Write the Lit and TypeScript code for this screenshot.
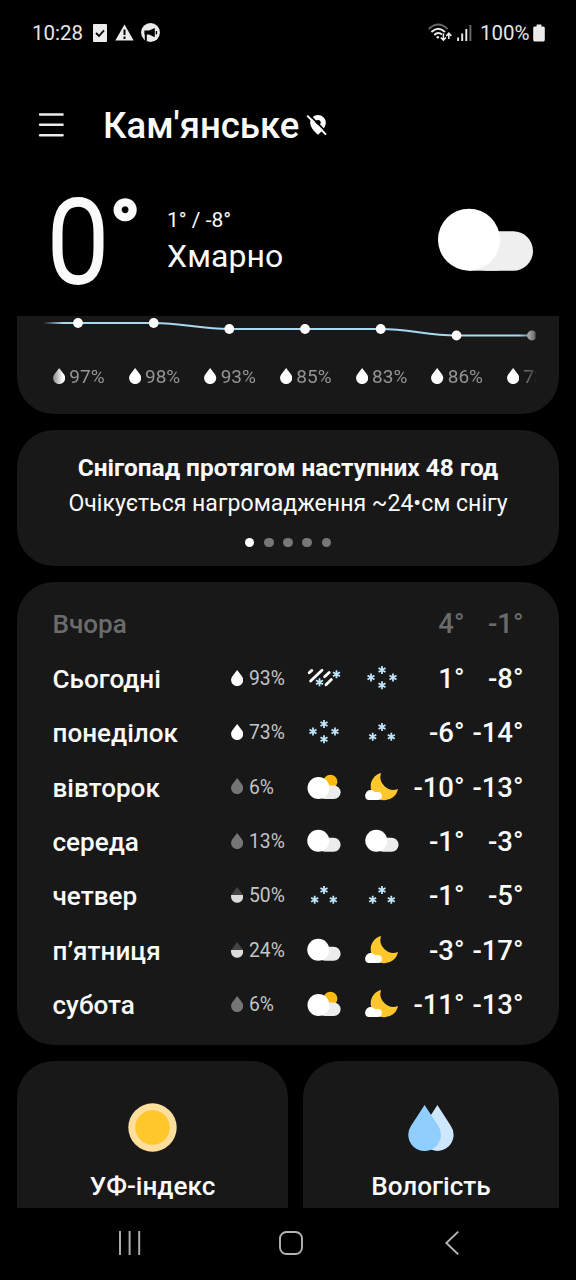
import { LitElement, html, svg, css } from "lit";
import { customElement } from "lit/decorators.js";

type Level = "full" | "half" | "low";

const FLAKE = "M0 -4V4M-3.5 -2L3.5 2M-3.5 2L3.5 -2";
const DROP = "M6.15 0L11.1 6.4A6.1 6.1 0 1 1 1.2 6.4Z";

const flake = (x: number, y: number) =>
  svg`<path d=${FLAKE} transform="translate(${x} ${y})" fill="none" stroke="#bfe5fb" stroke-width="1.8"/>`;

const icons: Record<string, unknown> = {
  cloud: svg`<rect x="-6" y="-4.2" width="22.6" height="14" rx="7" fill="#ececec"/>
    <circle cx="-5.7" cy="-1.3" r="11" fill="#fff"/>`,
  partly: svg`<circle cx="6.4" cy="-6.3" r="7" fill="#fcb90f"/>
    <rect x="-6" y="-2.6" width="22.6" height="13.6" rx="6.8" fill="#ececec"/>
    <circle cx="-5.5" cy="0" r="11" fill="#fff"/>`,
  moon: svg`<path d="M-1 -15A13.8 13.8 0 1 0 16 1A13 13 0 0 1 -1 -15Z" fill="#ffc72c"/>
    <rect x="-16.8" y="4" width="16.6" height="8" rx="4" fill="#fff"/>
    <circle cx="-11.4" cy="7" r="5" fill="#fff"/>`,
  snow4: svg`${flake(0, -9)}${flake(-11, -1.5)}${flake(11, -1.5)}${flake(0, 6.3)}`,
  snow3: svg`${flake(0, -6)}${flake(-9.3, 3.7)}${flake(9.3, 3.7)}`,
  sleet: svg`<path d="M-14.8 -6.2L-12.2 -8.6M-13.4 2L-2 -8.8M0.6 -2.2L5.2 -6.6M2 5.8L7.4 0.6" fill="none" stroke="#fff" stroke-width="2.8" stroke-linecap="round"/>
    ${flake(-4.5, 3.3)}${flake(12.5, -4.8)}`,
};

const weatherIcon = (name: string) =>
  html`<svg class="wicon" width="36" height="36" viewBox="-18 -18 36 36">${icons[name]}</svg>`;

const drop = (level: Level = "full") => html`<svg class="drop" width="12.3" height="16" viewBox="0 0 12.3 16">
  <path d=${DROP} fill=${level === "full" ? "#fff" : level === "low" ? "#757575" : "#434343"}/>
  ${level === "half" ? svg`<path d="M0.05 8H12.25V9.6A6.1 6.1 0 0 1 0.05 9.6Z" fill="#dcdcdc"/>` : ""}
</svg>`;

const days: [string, string, Level, string, string, string, string][] = [
  ["Сьогодні", "93%", "full", "sleet", "snow4", "1°", "-8°"],
  ["понеділок", "73%", "full", "snow4", "snow3", "-6°", "-14°"],
  ["вівторок", "6%", "low", "partly", "moon", "-10°", "-13°"],
  ["середа", "13%", "low", "cloud", "cloud", "-1°", "-3°"],
  ["четвер", "50%", "half", "snow3", "snow3", "-1°", "-5°"],
  ["п’ятниця", "24%", "half", "cloud", "moon", "-3°", "-17°"],
  ["субота", "6%", "low", "partly", "moon", "-11°", "-13°"],
];

const hours = ["97%", "98%", "93%", "85%", "83%", "86%", "73%"];
const points = [[61, 7], [136.7, 7], [212.3, 13], [288, 13], [363.7, 13], [439.5, 19.5], [515, 19.5]];

@customElement("app-root")
export class AppRoot extends LitElement {
  static styles = css`
    :host {
      display: flex;
      flex-direction: column;
      box-sizing: border-box;
      width: 576px;
      height: 1280px;
      overflow: hidden;
      background: #000;
      color: #fafafa;
      font-family: Roboto, "Noto Sans", sans-serif;
    }
    svg { display: block; flex: none; }
    .status {
      display: flex;
      align-items: center;
      height: 65px;
      padding: 0 31px 0 32px;
      font-size: 20.5px;
      color: #e6e6e6;
      box-sizing: border-box;
    }
    .clock { width: 61px; }
    .status-icons { display: flex; align-items: center; gap: 7.5px; flex: 1; }
    .signal { margin-left: 5.5px; }
    .charge { margin: 0 4px 0 8px; width: 49px; font-size: 20.5px; }
    .header {
      display: flex;
      align-items: center;
      height: 121px;
      padding: 0 38px;
      box-sizing: border-box;
    }
    .menu { margin-bottom: 2px; }
    .city {
      margin: 0 6.5px 0 39px;
      font-size: 36.5px;
      font-weight: 500;
    }
    .now {
      display: flex;
      height: 130px;
      padding: 0 42px 0 46px;
      box-sizing: border-box;
    }
    .temp { display: flex; width: 121px; }
    .zero {
      width: 65px;
      font-size: 115px;
      line-height: 113px;
      font-weight: 300;
      -webkit-text-stroke: 3.8px #fafafa;
      transform: scaleX(0.94);
    }
    .degree {
      margin-left: -1px;
      font-size: 78px;
      line-height: 88px;
      font-weight: 700;
      -webkit-text-stroke: 2.6px #fafafa;
    }
    .summary { flex: 1; padding-top: 21px; }
    .range { font-size: 21px; line-height: 26px; }
    .condition { font-size: 32px; line-height: 46px; letter-spacing: 0.1px; }
    .big-cloud { margin-top: 22px; }
    .scroll {
      display: flex;
      flex-direction: column;
      gap: 16px;
      height: 892px;
      padding: 0 17px;
      overflow: hidden;
      flex: none;
      box-sizing: border-box;
    }
    .card { background: #181818; border-radius: 37px; flex: none; box-sizing: border-box; }
    .hourly {
      height: 97.5px;
      border-radius: 0 0 37px 37px;
    }
    .fade {
      height: 97px;
      width: 542px;
      overflow: hidden;
      mask-image: linear-gradient(90deg, transparent 26px, #000 46px, #000 502px, rgba(0, 0, 0, 0.35) 518px, transparent 519px);
    }
    .hours { display: flex; margin: 11.5px 0 0 36px; width: 560px; }
    .hour {
      display: flex;
      align-items: center;
      gap: 4px;
      width: 75.7px;
      flex: none;
      font-size: 19px;
      line-height: 22px;
      color: #949494;
    }
    .hour .drop { margin-top: -2px; }
    .notice {
      height: 136.5px;
      padding-top: 21px;
      text-align: center;
    }
    .notice-title { font-size: 24.4px; line-height: 34px; font-weight: 700; }
    .notice-text { font-size: 23.05px; line-height: 37px; }
    .dots { display: flex; justify-content: center; gap: 9.8px; margin-top: 16px; }
    .dot { width: 9.4px; height: 9.4px; border-radius: 50%; background: #777; }
    .dot.on { background: #fff; }
    .week { height: 463px; padding: 15.3px 35px 0 35.5px; }
    .day {
      display: grid;
      grid-template-columns: 178.5px 18px 56.5px 36px 22px 36px 65px 59px;
      align-items: center;
      height: 54.4px;
      font-weight: 500;
      font-size: 26.1px;
      line-height: 34px;
    }
    .yesterday { color: #6b6b6b; }
    .day .drop { margin-top: -2.5px; }
    .chance { font-size: 19.3px; font-weight: 400; color: #c4c4c4; }
    .t { font-size: 27.5px; text-align: right; white-space: nowrap; }
    .blank { grid-column: span 5; }
    .tiles { display: grid; grid-template-columns: 271px 256px; gap: 15px; flex: none; margin-top: -0.5px; }
    .tile {
      display: flex;
      flex-direction: column;
      align-items: center;
      height: 230px;
      padding-top: 42px;
      font-size: 26.1px;
      line-height: 34px;
      font-weight: 500;
    }
    .tile svg { margin-bottom: 17.3px; }
    .nav {
      display: flex;
      align-items: center;
      justify-content: space-between;
      height: 72px;
      padding: 0 116px 3px 117px;
      box-sizing: border-box;
    }
    .home { margin-right: 6px; }
  `;

  render() {
    return html`
      <div class="status">
        <span class="clock">10:28</span>
        <div class="status-icons">
          <svg width="14" height="18" viewBox="0 0 14 18"><rect width="14" height="18" rx="1" fill="#ececec"/><path d="M3 9L6 12L11 6.4" fill="none" stroke="#000" stroke-width="1.8"/></svg>
          <svg width="19" height="17" viewBox="0 0 19 17"><path d="M9.5 0.5L18.7 16.5H0.3Z" fill="#ececec"/><path d="M9.5 5.5V11M9.5 12.6V15" stroke="#000" stroke-width="2"/></svg>
          <svg width="19" height="19" viewBox="0 0 19 19"><circle cx="9.5" cy="9.5" r="9.4" fill="#ececec"/><path d="M3.4 7.6H8L13.8 5V14.2L8 11.6H5.8V18H3.8V11.6H3.4Z" fill="#000"/><path d="M15.4 8V11.4" stroke="#000" stroke-width="1.4"/></svg>
        </div>
        <svg width="24" height="19" viewBox="0 0 24 19" fill="none">
          <path d="M0.8 6Q10.2 -3 19.6 6" stroke="#6a6a6a" stroke-width="1.8"/>
          <path d="M3.4 9Q10.2 2.4 17 9" stroke="#ececec" stroke-width="1.9"/>
          <path d="M6.2 12Q10.2 8.4 14 11.6" stroke="#ececec" stroke-width="1.9"/>
          <circle cx="9.8" cy="14.2" r="1.3" fill="#ececec"/>
          <path d="M15.4 10.6V17M12.8 14.4L15.4 17.2L18 14.4M20.8 16V10.4M18.2 13L20.8 10.2L23.4 13" stroke="#ececec" stroke-width="1.5"/>
        </svg>
        <svg class="signal" width="15" height="16" viewBox="0 0 15 16"><path d="M1.1 12.5V16M5.2 8.6V16M9.3 4V16" stroke="#ececec" stroke-width="1.9"/><path d="M13.4 0V16" stroke="#6a6a6a" stroke-width="1.9"/></svg>
        <span class="charge">100%</span>
        <svg width="12" height="18" viewBox="0 0 12 18"><path d="M3.6 0.6H8.4V2.4H10.4Q11.8 2.4 11.8 4V15.8Q11.8 17.4 10.4 17.4H1.6Q0.2 17.4 0.2 15.8V4Q0.2 2.4 1.6 2.4H3.6Z" fill="#ececec"/></svg>
      </div>

      <div class="header">
        <svg class="menu" width="26" height="26" viewBox="0 0 26 26"><path d="M2 2.5H24.6M2 12.8H24.6M2 23.3H24.6" stroke="#ececec" stroke-width="2.4" stroke-linecap="round"/></svg>
        <div class="city">Кам'янське</div>
        <svg width="22" height="24" viewBox="0 0 22 24"><path d="M12 1A7.8 7.8 0 0 1 19.8 8.8C19.8 13.4 14.8 18.6 12 20.8C9.2 18.6 4.2 13.4 4.2 8.8A7.8 7.8 0 0 1 12 1Z" fill="#fff"/><circle cx="12" cy="8.6" r="2.7" fill="#000"/><path d="M2.8 0.4L21.4 19.2" stroke="#000" stroke-width="1.8"/><path d="M1.2 1.6L20 20.6" stroke="#fff" stroke-width="2"/></svg>
      </div>

      <div class="now">
        <div class="temp"><span class="zero">0</span><span class="degree">°</span></div>
        <div class="summary">
          <div class="range">1° / -8°</div>
          <div class="condition">Хмарно</div>
        </div>
        <svg class="big-cloud" width="96" height="64" viewBox="0 0 96 64"><rect x="30" y="23.3" width="65" height="39.4" rx="19.7" fill="#efefef"/><path d="M31 40H60V62.7H31Z" fill="#efefef"/><circle cx="31" cy="31.7" r="31" fill="#fff"/></svg>
      </div>

      <div class="scroll">
        <div class="card hourly">
          <div class="fade">
            <svg width="542" height="38" viewBox="0 0 542 38">
              <path d="M20 7H136.7C165 7 184 13 212.3 13H363.7C392 13 411 19.5 439.5 19.5H530" fill="none" stroke="#a9d8f2" stroke-width="2.2"/>
              ${points.map(([x, y]) => svg`<circle cx=${x} cy=${y} r="4.9" fill="#fff"/>`)}
            </svg>
            <div class="hours">${hours.map((h) => html`<div class="hour">${drop()}<span>${h}</span></div>`)}</div>
          </div>
        </div>

        <div class="card notice">
          <div class="notice-title">Снігопад протягом наступних 48 год</div>
          <div class="notice-text">Очікується нагромадження ~24•см снігу</div>
          <div class="dots">${[0, 1, 2, 3, 4].map((i) => html`<span class="dot ${i === 0 ? "on" : ""}"></span>`)}</div>
        </div>

        <div class="card week">
          <div class="day yesterday">
            <span>Вчора</span><span class="blank"></span><span class="t">4°</span><span class="t">-1°</span>
          </div>
          ${days.map(([name, chance, level, day, night, hi, lo]) => html`
            <div class="day">
              <span>${name}</span>
              ${drop(level)}
              <span class="chance">${chance}</span>
              ${weatherIcon(day)}
              <span></span>
              ${weatherIcon(night)}
              <span class="t">${hi}</span>
              <span class="t">${lo}</span>
            </div>`)}
        </div>

        <div class="tiles">
          <div class="card tile">
            <svg width="49" height="49" viewBox="0 0 49 49"><circle cx="24.5" cy="24.5" r="24.2" fill="#ffdf9b"/><circle cx="24.5" cy="24.5" r="17.3" fill="#ffc72b"/></svg>
            <span>УФ-індекс</span>
          </div>
          <div class="card tile">
            <svg width="46" height="49" viewBox="0 0 46 49"><path d="M29.4 2L42.6 22.4A16.2 16.2 0 1 1 16.2 22.4Z" fill="#cde7ff"/><path d="M16.6 2L30 22.4A16.3 16.3 0 1 1 3.2 22.4Z" fill="#90ceff"/></svg>
            <span>Вологість</span>
          </div>
        </div>
      </div>

      <div class="nav">
        <svg width="26" height="26" viewBox="0 0 26 26"><path d="M3 1V25M12.6 1V25M22.2 1V25" stroke="#aaa" stroke-width="2"/></svg>
        <svg class="home" width="26" height="26" viewBox="0 0 26 26"><rect x="2" y="2" width="22" height="22" rx="6.5" fill="none" stroke="#b4b4b4" stroke-width="1.9"/></svg>
        <svg width="16" height="26" viewBox="0 0 16 26"><path d="M14.2 1.6L2.4 13L14.2 24.4" fill="none" stroke="#b4b4b4" stroke-width="2"/></svg>
      </div>
    `;
  }
}
